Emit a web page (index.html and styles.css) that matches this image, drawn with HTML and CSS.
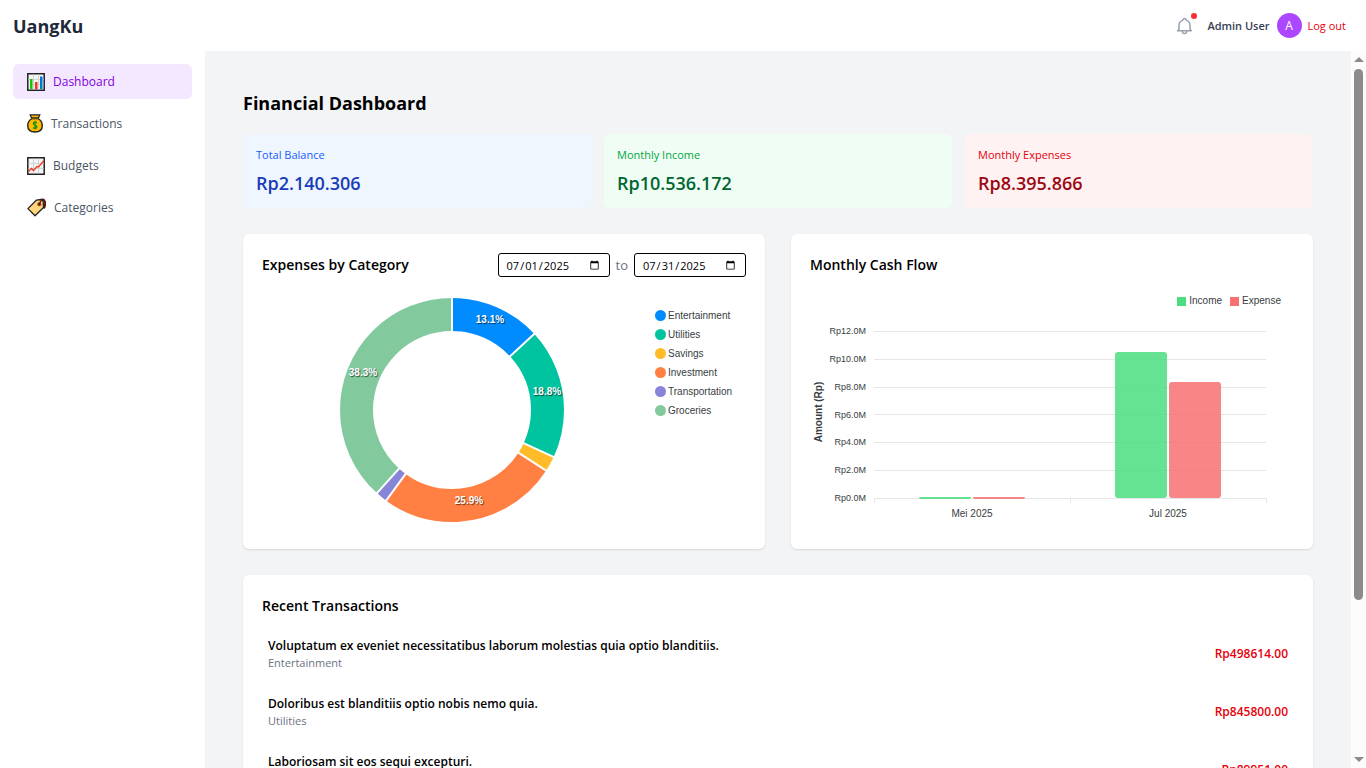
FILE: index.html
```html
<!DOCTYPE html>
<html lang="en">
<head>
<meta charset="utf-8">
<title>UangKu</title>
<meta name="viewport" content="width=device-width, initial-scale=1">
<link rel="stylesheet" href="styles.css">
</head>
<body>
<header class="topbar">
  <div class="brand">UangKu</div>
  <div class="account">
    <button class="bell" type="button" aria-label="Notifications">
      <svg width="17" height="18" viewBox="0 0 17 18" fill="none" stroke="#99a1af" stroke-width="1.5" stroke-linecap="round" stroke-linejoin="round"><path d="M1.7 13.8h13.6L14 12.2V8.500C14 6 12.400 3.900 10.200 3.100 10 2 9.400 1.400 8.500 1.400S7 2 6.800 3.100C4.600 3.900 3 6 3 8.500v3.700z"/><path d="M6.300 14.200c0 1.400.9 2.300 2.200 2.300s2.200-.9 2.200-2.300"/></svg>
      <span class="bell-dot"></span>
    </button>
    <span class="user-name">Admin User</span>
    <span class="avatar">A</span>
    <button class="logout" type="button">Log out</button>
  </div>
</header>
<div class="shell">
  <nav class="sidebar">
    <a class="nav-item active" href="#"><svg width="18" height="18" viewBox="0 0 18 18"><path fill="#f4f4f6" stroke="#222" stroke-width="1.500" d="M.8.8h16.400v16.400H.8z"/><path stroke="#d3d3d8" d="M1.500 6.500h15M1.500 11.500h15M6.500 1.500v15M11.500 1.500v15"/><path fill="#16c60c" d="M3 6h2.500v10H3z"/><path fill="#f03a17" d="M8 9h2.500v7H8z"/><path fill="#0078d7" d="M13 3.500h2.500V16H13z"/></svg>Dashboard</a>
    <a class="nav-item" href="#"><svg width="16" height="19" viewBox="0 0 16 19"><path fill="#ffb900" stroke="#222" stroke-width="1.400" d="M5 4.500h6c2.700 1.500 4.300 4 4.300 7 0 4-2.500 6.500-7.300 6.500S.7 15.500.7 11.500c0-3 1.600-5.500 4.300-7z"/><path fill="#ffb900" stroke="#222" stroke-width="1.200" d="M3.200.9h9.600L11.500 3.800h-7z"/><path stroke="#6b4d00" stroke-width="1.200" d="M4.500 4.500h7"/><path fill="none" stroke="#13910c" stroke-width="1.300" d="M10 8.700C8.500 7.700 6.300 8 6.300 9.500c0 1.800 3.600 1.300 3.600 3.200 0 1.700-2.400 1.900-3.900.9M8.100 6.800v8.700"/></svg>Transactions</a>
    <a class="nav-item" href="#"><svg width="18" height="18" viewBox="0 0 18 18"><path fill="#f4f4f6" stroke="#222" stroke-width="1.500" d="M.8.8h16.400v16.400H.8z"/><path stroke="#d3d3d8" d="M1.500 6.500h15M1.500 11.500h15M6.500 1.500v15M11.500 1.500v15"/><path fill="none" stroke="#f03a17" stroke-width="1.300" d="M1.500 14.500l3-3 2 2L10 9.500l1.500.5 5-6"/></svg>Budgets</a>
    <a class="nav-item" href="#"><svg width="19" height="19" viewBox="0 0 19 19"><path fill="none" stroke="#5a1a10" stroke-width="2" d="M12 6c0-4 4-5.500 5.300-3.500 1 1.500.9 5-.3 8"/><path fill="#ffd67a" stroke="#222" stroke-width="1.300" stroke-linejoin="round" d="M9.300 2.200l5.200-.7 1.700 1.700.3 6.300L8 17.800.9 10.600z"/><circle cx="12.300" cy="6.300" r="2" fill="#a4351c"/><circle cx="12.300" cy="6.300" r=".8" fill="#222"/><path fill="none" stroke="#5a1a10" stroke-width="1.300" d="M12.500 6C13 3 15 1.300 16.800 2.400"/></svg>Categories</a>
  </nav>
  <main class="content">
    <h1 class="page-title">Financial Dashboard</h1>
    <section class="stats">
      <div class="stat stat-balance"><p class="stat-label">Total Balance</p><p class="stat-value">Rp2.140.306</p></div>
      <div class="stat stat-income"><p class="stat-label">Monthly Income</p><p class="stat-value">Rp10.536.172</p></div>
      <div class="stat stat-expense"><p class="stat-label">Monthly Expenses</p><p class="stat-value">Rp8.395.866</p></div>
    </section>
    <section class="charts">
      <article class="card chart-card">
        <div class="card-head">
          <h2 class="card-title">Expenses by Category</h2>
          <div class="range">
            <input class="date" type="date" value="2025-07-01" aria-label="Start date">
            <span>to</span>
            <input class="date" type="date" value="2025-07-31" aria-label="End date">
          </div>
        </div>
        <div class="donut-row">
          <svg class="donut" viewBox="0 0 226 226" role="img" aria-label="Expenses by category">
            <g class="ring" transform="rotate(-90 113 113)">
              <circle cx="113" cy="113" r="95.500" pathLength="100" stroke="#008cff" stroke-dasharray="13.100 86.900"/>
              <circle cx="113" cy="113" r="95.500" pathLength="100" stroke="#00c49f" stroke-dasharray="18.800 81.200" stroke-dashoffset="-13.100"/>
              <circle cx="113" cy="113" r="95.500" pathLength="100" stroke="#ffbb28" stroke-dasharray="2.200 97.800" stroke-dashoffset="-31.900"/>
              <circle cx="113" cy="113" r="95.500" pathLength="100" stroke="#ff8042" stroke-dasharray="25.900 74.100" stroke-dashoffset="-34.100"/>
              <circle cx="113" cy="113" r="95.500" pathLength="100" stroke="#8884d8" stroke-dasharray="1.700 98.300" stroke-dashoffset="-60"/>
              <circle cx="113" cy="113" r="95.500" pathLength="100" stroke="#82ca9d" stroke-dasharray="38.300 61.700" stroke-dashoffset="-61.700"/>
            </g>
            <g stroke="#fff" stroke-width="2">
              <path d="M113 36V0"/>
              <path d="M113 36V0" transform="rotate(47.200 113 113)"/>
              <path d="M113 36V0" transform="rotate(114.800 113 113)"/>
              <path d="M113 36V0" transform="rotate(122.800 113 113)"/>
              <path d="M113 36V0" transform="rotate(216 113 113)"/>
              <path d="M113 36V0" transform="rotate(222.100 113 113)"/>
            </g>
            <g class="slice-labels">
              <text x="151" y="26">13.1%</text>
              <text x="208" y="98">18.8%</text>
              <text x="130" y="207">25.9%</text>
              <text x="24" y="79">38.3%</text>
            </g>
          </svg>
          <ul class="legend">
            <li><i class="dot c1"></i>Entertainment</li>
            <li><i class="dot c2"></i>Utilities</li>
            <li><i class="dot c3"></i>Savings</li>
            <li><i class="dot c4"></i>Investment</li>
            <li><i class="dot c5"></i>Transportation</li>
            <li><i class="dot c6"></i>Groceries</li>
          </ul>
        </div>
      </article>
      <article class="card chart-card">
        <h2 class="card-title">Monthly Cash Flow</h2>
        <ul class="bar-legend">
          <li><i class="square income"></i>Income</li>
          <li><i class="square expense"></i>Expense</li>
        </ul>
        <svg class="bars" viewBox="0 0 484 216" role="img" aria-label="Monthly cash flow">
          <g stroke="#e6e6e6">
            <path d="M64 21.500h392M64 49.500h392M64 77.500h392M64 104.500h392M64 132.500h392M64 160.500h392M64 188.500h392"/>
            <path d="M64.500 188v5M260.500 188v5M456.500 188v5"/>
          </g>
          <g class="y-labels">
            <text x="56" y="24">Rp12.0M</text>
            <text x="56" y="52">Rp10.0M</text>
            <text x="56" y="80">Rp8.0M</text>
            <text x="56" y="108">Rp6.0M</text>
            <text x="56" y="135">Rp4.0M</text>
            <text x="56" y="163">Rp2.0M</text>
            <text x="56" y="191">Rp0.0M</text>
          </g>
          <text class="axis-title" transform="translate(12 102) rotate(-90)">Amount (Rp)</text>
          <g fill="#4ade80" fill-opacity=".85">
            <path d="M109 187h52q0 2-3 2h-46q-3 0-3-2z"/>
            <rect x="305" y="42" width="52" height="146" rx="3"/>
          </g>
          <g fill="#f87171" fill-opacity=".85">
            <path d="M163 187h52q0 2-3 2h-46q-3 0-3-2z"/>
            <rect x="359" y="72" width="52" height="116" rx="3"/>
          </g>
          <g class="x-labels">
            <text x="162" y="207">Mei 2025</text>
            <text x="358" y="207">Jul 2025</text>
          </g>
        </svg>
      </article>
    </section>
    <section class="card recent">
      <h2 class="card-title">Recent Transactions</h2>
      <ul class="tx-list">
        <li class="tx"><div><p class="tx-name">Voluptatum ex eveniet necessitatibus laborum molestias quia optio blanditiis.</p><p class="tx-cat">Entertainment</p></div><span class="tx-amount">Rp498614.00</span></li>
        <li class="tx"><div><p class="tx-name">Doloribus est blanditiis optio nobis nemo quia.</p><p class="tx-cat">Utilities</p></div><span class="tx-amount">Rp845800.00</span></li>
        <li class="tx"><div><p class="tx-name">Laboriosam sit eos sequi excepturi.</p><p class="tx-cat">Savings</p></div><span class="tx-amount">Rp89951.00</span></li>
      </ul>
    </section>
  </main>
  <div class="scroll-rail" aria-hidden="true">
    <span class="arrow up"></span>
    <span class="track"><span class="thumb"></span></span>
    <span class="arrow down"></span>
  </div>
</div>
</body>
</html>
```
FILE: styles.css
```css
* { box-sizing: border-box; margin: 0; padding: 0; }
body {
  height: 100vh;
  display: flex;
  flex-direction: column;
  overflow: hidden;
  font-family: "Open Sans", "Noto Sans", sans-serif;
  font-size: 12px;
  color: #000;
  background: #fff;
}
ul { list-style: none; }
button { border: 0; background: none; font: inherit; cursor: pointer; }
svg { display: block; }

.topbar {
  flex: none;
  height: 51px;
  padding: 0 20px 0 13px;
  display: flex;
  align-items: center;
  justify-content: space-between;
}
.brand { font-size: 18px; font-weight: 700; color: #1e2939; }
.account { display: flex; align-items: center; }
.bell { position: relative; margin-right: 14px; }
.bell-dot {
  position: absolute;
  top: -4px;
  right: -4px;
  width: 6px;
  height: 6px;
  border-radius: 50%;
  background: #fb2c36;
}
.user-name { font-size: 11px; font-weight: 600; color: #364153; margin-right: 7px; }
.avatar {
  width: 25px;
  height: 25px;
  margin-right: 6px;
  border-radius: 50%;
  background: #ad46ff;
  color: #fff;
  font-size: 12px;
  display: grid;
  place-items: center;
}
.logout { font-size: 11px; color: #e7000b; }

.shell { flex: 1; min-height: 0; display: flex; }
.sidebar {
  flex: none;
  width: 205px;
  padding: 13px;
  display: flex;
  flex-direction: column;
  gap: 7px;
}
.nav-item {
  height: 35px;
  padding: 0 14px;
  display: flex;
  align-items: center;
  gap: 8px;
  border-radius: 6px;
  color: #4a5565;
  font-size: 12px;
  text-decoration: none;
}
.nav-item.active { background: #f3e8ff; color: #8200db; }

.content {
  flex: 1;
  min-width: 0;
  padding: 38px;
  overflow: auto;
  scrollbar-width: none;
  background: #f3f4f6;
}
.page-title { font-size: 18px; line-height: 28px; font-weight: 700; margin-bottom: 17px; }
.stats { display: grid; grid-template-columns: repeat(3, 1fr); gap: 13px; margin-bottom: 26px; }
.stat { padding: 13px; border-radius: 6px; }
.stat-label { font-size: 11px; line-height: 16px; margin-bottom: 8px; }
.stat-value { font-size: 18px; line-height: 24px; font-weight: 600; }
.stat-balance { background: #eff6ff; color: #193cb8; }
.stat-balance .stat-label { color: #155dfc; }
.stat-income { background: #f0fdf4; color: #016630; }
.stat-income .stat-label { color: #00a63e; }
.stat-expense { background: #fef2f2; color: #9f0712; }
.stat-expense .stat-label { color: #e7000b; }

.card {
  padding: 19px;
  border-radius: 6px;
  background: #fff;
  box-shadow: 0 1px 2px rgba(0, 0, 0, .12);
}
.card-title { font-size: 14px; line-height: 24px; font-weight: 600; }
.charts { display: grid; grid-template-columns: 1fr 1fr; gap: 26px; margin-bottom: 26px; }
.chart-card { min-height: 315px; }
.card-head { display: flex; align-items: center; justify-content: space-between; margin-bottom: 20px; }
.range { display: flex; align-items: center; gap: 6px; color: #6a7282; font-size: 13px; }
.date {
  width: 112px;
  height: 24px;
  padding: 0 7px;
  border: 1px solid #000;
  border-radius: 3px;
  background: #fff;
  color: #000;
  font-family: inherit;
  font-size: 11px;
}

.donut-row { display: grid; grid-template-columns: 1fr 91px; gap: 13px; align-items: start; }
.donut { width: 100%; max-width: 226px; justify-self: center; }
.ring { fill: none; stroke-width: 33; }
.slice-labels {
  font: bold 10px "Liberation Sans", Arial, sans-serif;
  fill: #fff;
  text-anchor: middle;
  text-shadow: 1px 1px 1px rgba(0, 0, 0, .6);
}
.legend, .bar-legend {
  font-family: "Liberation Sans", Arial, sans-serif;
  font-size: 10px;
  color: #373d3f;
}
.legend { padding-top: 9px; }
.legend li { display: flex; align-items: center; gap: 2px; line-height: 19px; }
.dot { width: 11px; height: 11px; border-radius: 50%; }
.c1 { background: #008cff; }
.c2 { background: #00c49f; }
.c3 { background: #ffbb28; }
.c4 { background: #ff8042; }
.c5 { background: #8884d8; }
.c6 { background: #82ca9d; }

.bar-legend { display: flex; justify-content: flex-end; gap: 8px; padding: 17px 13px 2px 0; }
.bar-legend li { display: flex; align-items: center; gap: 3px; line-height: 14px; }
.square { width: 9px; height: 9px; }
.income { background: #4ade80; }
.expense { background: #f87171; }
.bars { width: 100%; height: auto; font-family: "Liberation Sans", Arial, sans-serif; fill: #373d3f; }
.y-labels { font-size: 9px; text-anchor: end; }
.x-labels { font-size: 10px; text-anchor: middle; }
.axis-title { font-size: 10px; font-weight: 700; text-anchor: middle; }

.tx-list { margin-top: 6px; }
.tx { padding: 6px; min-height: 58px; display: flex; align-items: center; justify-content: space-between; }
.tx-name { font-size: 12px; line-height: 19px; font-weight: 600; }
.tx-cat { font-size: 11px; line-height: 16px; color: #6a7282; }
.tx-amount { font-size: 12px; font-weight: 600; color: #e7000b; }

.scroll-rail {
  flex: none;
  width: 15px;
  padding: 6px 0;
  display: flex;
  flex-direction: column;
  align-items: center;
  gap: 7px;
  background: #fcfcfc;
}
.arrow { border: 5px solid transparent; }
.up { border-top: 0; border-bottom-color: #8b8b8b; }
.down { border-bottom: 0; border-top-color: #8b8b8b; }
.track { flex: 1; width: 9px; }
.thumb { display: block; height: 78%; border-radius: 5px; background: #8b8b8b; }
```
